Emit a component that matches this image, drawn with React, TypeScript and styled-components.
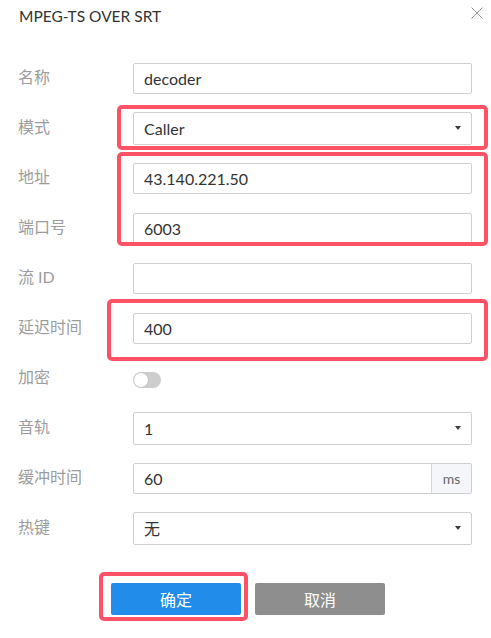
import React from "react";
import styled, { createGlobalStyle } from "styled-components";

const Global = createGlobalStyle`
  html, body { margin: 0; padding: 0; background: #fff; }
  body { font-family: Lato, "Noto Sans CJK SC", sans-serif; }
  * { box-sizing: border-box; }
`;

const Dialog = styled.div`
  position: relative;
  width: 491px;
  height: 638px;
  background: #fff;
`;

const Header = styled.div`
  display: flex;
  justify-content: space-between;
  align-items: flex-start;
  padding: 6px 8px 0 19px;
  height: 53px;
`;

const Title = styled.div`
  font-size: 15.5px;
  line-height: 20px;
  color: #333;
`;

const Close = styled.button`
  margin-top: 1px;
  width: 12px;
  height: 12px;
  padding: 0;
  border: 0;
  background: none;
  display: flex;
  cursor: pointer;
`;

const Form = styled.div`
  display: flex;
  flex-direction: column;
  padding: 0 19px 0 18px;
`;

const Row = styled.div`
  display: flex;
  align-items: center;
  height: 50px;
`;

const Label = styled.div`
  width: 115px;
  flex: none;
  font-size: 16px;
  line-height: 20px;
  color: #9c9c9c;
  margin-top: -3px;
`;

const Field = styled.div<{ $tall?: boolean }>`
  flex: 1;
  display: flex;
  align-items: center;
  height: ${(p) => (p.$tall ? 33 : 31)}px;
  border: 1px solid #cfcfcf;
  border-radius: 2px;
  background: #fff;
  overflow: hidden;
`;

const Value = styled.div`
  flex: 1;
  padding: 0 10px;
  font-size: 16px;
  color: #333;
  white-space: nowrap;
`;

const Caret = styled.span`
  width: 0;
  height: 0;
  margin-right: 10px;
  border-left: 3.5px solid transparent;
  border-right: 3.5px solid transparent;
  border-top: 4px solid #3a3a3a;
`;

const Addon = styled.div`
  width: 40px;
  align-self: stretch;
  display: flex;
  align-items: center;
  justify-content: center;
  background: #f4f6f9;
  border-left: 1px solid #d6d6d6;
  font-size: 14px;
  color: #666;
`;

const Toggle = styled.div`
  position: relative;
  width: 28px;
  height: 16px;
  border-radius: 8px;
  background: #cdcdcd;
  margin-top: 4px;
  &::after {
    content: "";
    position: absolute;
    left: 1px;
    top: 1px;
    width: 14px;
    height: 14px;
    border-radius: 50%;
    background: #fff;
    box-shadow: 0 0 1px rgba(0, 0, 0, 0.2);
  }
`;

const Actions = styled.div`
  display: flex;
  justify-content: center;
  gap: 14px;
  margin-top: 30px;
  padding-left: 5px;
`;

const Button = styled.button<{ $primary?: boolean }>`
  width: 130px;
  height: 32px;
  border: 0;
  border-radius: 2px;
  font-family: Lato, "Noto Sans CJK SC", sans-serif;
  font-size: 16px;
  color: #fff;
  background: ${(p) => (p.$primary ? "#218cea" : "#8e8e8e")};
  cursor: pointer;
`;

const Mark = styled.div<{ $x: number; $y: number; $w: number; $h: number }>`
  position: absolute;
  left: ${(p) => p.$x}px;
  top: ${(p) => p.$y}px;
  width: ${(p) => p.$w}px;
  height: ${(p) => p.$h}px;
  border: 4px solid #fd5166;
  border-radius: 5px;
  pointer-events: none;
`;

const TextRow = ({ label, value }: { label: string; value?: string }) => (
  <Row>
    <Label>{label}</Label>
    <Field>
      <Value>{value}</Value>
    </Field>
  </Row>
);

const SelectRow = ({ label, value }: { label: string; value: string }) => (
  <Row>
    <Label>{label}</Label>
    <Field $tall>
      <Value>{value}</Value>
      <Caret />
    </Field>
  </Row>
);

export default function App() {
  return (
    <>
      <Global />
      <Dialog>
        <Header>
          <Title>MPEG-TS OVER SRT</Title>
          <Close aria-label="close">
            <svg width="12" height="12" viewBox="0 0 12 12">
              <path d="M0.5 0.5 L11.5 11.5 M11.5 0.5 L0.5 11.5" stroke="#9a9a9a" strokeWidth="1" fill="none" />
            </svg>
          </Close>
        </Header>
        <Form>
          <TextRow label="名称" value="decoder" />
          <SelectRow label="模式" value="Caller" />
          <TextRow label="地址" value="43.140.221.50" />
          <TextRow label="端口号" value="6003" />
          <TextRow label="流 ID" />
          <TextRow label="延迟时间" value="400" />
          <Row>
            <Label>加密</Label>
            <Toggle />
          </Row>
          <SelectRow label="音轨" value="1" />
          <Row>
            <Label>缓冲时间</Label>
            <Field>
              <Value>60</Value>
              <Addon>ms</Addon>
            </Field>
          </Row>
          <SelectRow label="热键" value="无" />
        </Form>
        <Actions>
          <Button $primary>确定</Button>
          <Button>取消</Button>
        </Actions>
        <Mark $x={117} $y={105} $w={371} $h={45} />
        <Mark $x={117} $y={152} $w={371} $h={94} />
        <Mark $x={107} $y={299} $w={381} $h={62} />
        <Mark $x={99} $y={572} $w={149} $h={49} />
      </Dialog>
    </>
  );
}
